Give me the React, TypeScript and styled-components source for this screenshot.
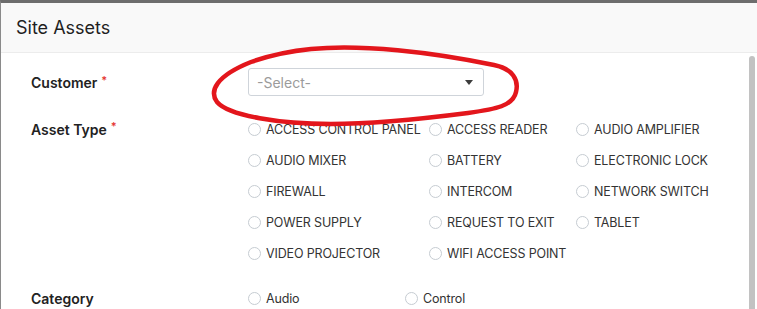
import React from 'react'
import styled, { createGlobalStyle } from 'styled-components'

const GlobalStyle = createGlobalStyle`
  html, body {
    margin: 0;
    padding: 0;
    background: #fff;
  }
  body {
    font-family: Inter, "Open Sans", "Liberation Sans", sans-serif;
    color: #222;
  }
`

const Window = styled.div`
  position: relative;
  width: 757px;
  height: 309px;
  box-sizing: border-box;
  border-top: 3px solid #6d6d6d;
  border-left: 1px solid #8a8a8a;
  overflow: hidden;
  background: #fff;
`

const Header = styled.div`
  height: 50px;
  box-sizing: border-box;
  display: flex;
  align-items: center;
  padding-left: 15px;
  background: #f9f9f9;
  border-bottom: 1px solid #ececec;
  font-size: 18px;
  font-weight: 400;
  color: #1f1f1f;
`

const Body = styled.div`
  display: flex;
  height: 256px;
`

const Content = styled.div`
  flex: 1;
  padding: 15px 0 0 30px;
`

const ScrollTrack = styled.div`
  width: 8px;
  padding: 3px 2px 0 0;
  display: flex;
  justify-content: flex-end;
`

const ScrollThumb = styled.div`
  width: 6px;
  height: 100%;
  background: #c2c2c2;
  border-radius: 3px 3px 0 0;
`

const Row = styled.div<{ $gap: number }>`
  display: grid;
  grid-template-columns: 217px 1fr;
  margin-bottom: ${p => p.$gap}px;
`

const Label = styled.div<{ $height: number }>`
  height: ${p => p.$height}px;
  display: flex;
  align-items: center;
  font-size: 14px;
  font-weight: 600;
  color: #222;
`

const Required = styled.span`
  color: #e53935;
  font-size: 11px;
  margin-left: 4px;
  align-self: flex-start;
  margin-top: 5px;
`

const Select = styled.div`
  width: 236px;
  height: 28px;
  box-sizing: border-box;
  border: 1px solid #cfd4da;
  border-radius: 3px;
  display: flex;
  align-items: center;
  justify-content: space-between;
  padding: 0 10px 0 8px;
  font-size: 14px;
  color: #9b9b9b;
`

const Caret = styled.span`
  width: 0;
  height: 0;
  border-left: 4px solid transparent;
  border-right: 4px solid transparent;
  border-top: 5px solid #3c3c3c;
`

const OptionGrid = styled.div<{ $columns: string }>`
  display: grid;
  grid-template-columns: ${p => p.$columns};
`

const Option = styled.label`
  height: 31px;
  display: flex;
  align-items: center;
  gap: 5px;
  font-size: 12.5px;
  color: #333;
  white-space: nowrap;
  letter-spacing: -0.15px;
`

const Radio = styled.span`
  width: 13px;
  height: 13px;
  box-sizing: border-box;
  border: 1px solid #c6ccd2;
  border-radius: 50%;
  flex: none;
`

const Marker = styled.svg`
  position: absolute;
  left: 0;
  top: 0;
  pointer-events: none;
`

const assetTypes = [
  'ACCESS CONTROL PANEL', 'ACCESS READER', 'AUDIO AMPLIFIER',
  'AUDIO MIXER', 'BATTERY', 'ELECTRONIC LOCK',
  'FIREWALL', 'INTERCOM', 'NETWORK SWITCH',
  'POWER SUPPLY', 'REQUEST TO EXIT', 'TABLET',
  'VIDEO PROJECTOR', 'WIFI ACCESS POINT',
]

const categories = ['Audio', 'Control']

export default function App() {
  return <>
    <GlobalStyle />
    <Window>
      <Header>Site Assets</Header>
      <Body>
        <Content>
          <Row $gap={18}>
            <Label $height={28}>Customer<Required>*</Required></Label>
            <Select>
              -Select-
              <Caret />
            </Select>
          </Row>
          <Row $gap={14}>
            <Label $height={31}>Asset Type<Required>*</Required></Label>
            <OptionGrid $columns="181px 147px auto">
              {assetTypes.map(t => <Option key={t}><Radio />{t}</Option>)}
            </OptionGrid>
          </Row>
          <Row $gap={0}>
            <Label $height={31}>Category</Label>
            <OptionGrid $columns="157px 157px">
              {categories.map(c => <Option key={c}><Radio />{c}</Option>)}
            </OptionGrid>
          </Row>
        </Content>
        <ScrollTrack>
          <ScrollThumb />
        </ScrollTrack>
      </Body>
      <Marker width="757" height="309" viewBox="0 -3 757 309">
        <path
          d="M 310,43 C 360,38 430,46 493,59 C 512,63 518,74 515,86 C 512,100 495,103 467,107 C 420,113 370,118 330,118 C 280,118 228,110 216,96 C 208,85 215,70 250,56 C 270,49 290,45 310,43 Z"
          fill="none"
          stroke="#e3161c"
          strokeWidth="4.5"
          strokeLinejoin="round"
        />
      </Marker>
    </Window>
  </>
}
